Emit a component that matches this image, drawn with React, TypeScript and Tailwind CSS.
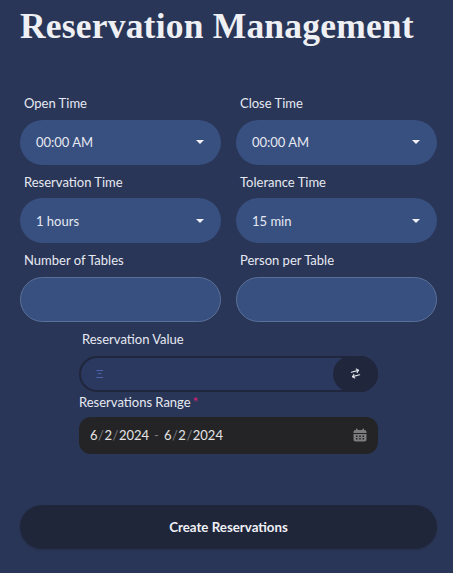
import { ArrowRightLeft } from "lucide-react";

const uiFont = "font-['Lato','Noto_Sans',sans-serif]";

function Field({ label, children }: { label: string; children: React.ReactNode }) {
  return (
    <div className="flex flex-col">
      <label className="h-[33.5px] pl-1 pt-[8px] text-[13px] leading-[18px] text-[#e6e9f2]">{label}</label>
      {children}
    </div>
  );
}

function SelectBox({ value }: { value: string }) {
  return (
    <div className="flex h-[45px] items-center justify-between rounded-full bg-[#385080] pl-4 pr-4 text-[13px] text-[#e6e9f2]">
      <span className="pt-[2px]">{value}</span>
      <span className="mr-[1px] h-0 w-0 border-x-[4px] border-t-[4px] border-x-transparent border-t-[#eef1f7]" />
    </div>
  );
}

function TextBox() {
  return <input className="h-[45px] w-full rounded-full border border-[#5a7099] bg-[#385080] px-4 outline-none" />;
}

export default function App() {
  return (
    <div className={`h-[573px] w-[453px] overflow-hidden bg-[#2a3657] ${uiFont}`}>
      <h1 className="h-[86px] pl-5 pt-[5px] font-['Liberation_Serif',serif] text-[35.5px] leading-[42px] font-bold tracking-[0.2px] text-[#eef0f4]">
        Reservation Management
      </h1>

      <div className="grid grid-cols-2 gap-x-[15px] px-5 pr-4">
        <Field label="Open Time"><SelectBox value="00:00 AM" /></Field>
        <Field label="Close Time"><SelectBox value="00:00 AM" /></Field>
        <Field label="Reservation Time"><SelectBox value="1 hours" /></Field>
        <Field label="Tolerance Time"><SelectBox value="15 min" /></Field>
        <Field label="Number of Tables"><TextBox /></Field>
        <Field label="Person per Table"><TextBox /></Field>
      </div>

      <div className="ml-[79px] w-[299px]">
        <div className="h-[34px] pl-[3px] pt-[8px] text-[13px] leading-[18px] text-[#e6e9f2]">Reservation Value</div>
        <div className="flex h-[36px] items-center justify-between rounded-full border-2 border-[#20263c] bg-[#2b3860]">
          <span className="pl-[15px] text-[12px] leading-none text-[#4f64a8]">Ξ</span>
          <span className="-mr-[2px] flex h-[36px] w-[45px] items-center justify-center rounded-full bg-[#20263c]">
            <ArrowRightLeft className="size-[11px] -rotate-[15deg] text-[#e3e5ea]" strokeWidth={2.5} />
          </span>
        </div>
        <div className="h-[25px] pt-[1px] text-[13px] leading-[18px] text-[#e6e9f2]">
          Reservations Range<span className="ml-[2px] text-[#e0207a]">*</span>
        </div>
        <div className="flex h-[37px] items-center justify-between rounded-xl bg-[#242427] pl-[11px] pr-[11px] text-[13px] text-[#e4e4e4]">
          <span className="pt-[2px]">
            6<span className="mx-[0.5px] text-[#77797f]">/</span>2<span className="mx-[0.5px] text-[#77797f]">/</span>2024
            <span className="mx-[5px] text-[#77797f]">-</span>
            6<span className="mx-[0.5px] text-[#77797f]">/</span>2<span className="mx-[0.5px] text-[#77797f]">/</span>2024
          </span>
          <svg viewBox="0 0 14 14" className="size-[14px]" fill="#7d7d80">
            <rect x="3" y="0.5" width="1.6" height="3" rx="0.6" />
            <rect x="9.4" y="0.5" width="1.6" height="3" rx="0.6" />
            <path d="M2.5 2H11.5A2 2 0 0 1 13.5 4V5H0.5V4A2 2 0 0 1 2.5 2Z" />
            <path
              fillRule="evenodd"
              d="M0.5 6H13.5V11.5A2 2 0 0 1 11.5 13.5H2.5A2 2 0 0 1 0.5 11.5ZM3 7.5V9H4.5V7.5ZM6.2 7.5V9H7.8V7.5ZM9.5 7.5V9H11V7.5ZM3 10V11.5H4.5V10ZM6.2 10V11.5H7.8V10ZM9.5 10V11.5H11V10Z"
            />
          </svg>
        </div>
      </div>

      <div className="mt-[51px] pl-5 pr-4">
        <button className="h-[44px] w-full rounded-full bg-[#20263a] pt-[2px] text-[13.3px] font-bold text-[#f0f1f6] shadow-sm">
          Create Reservations
        </button>
      </div>
    </div>
  );
}
